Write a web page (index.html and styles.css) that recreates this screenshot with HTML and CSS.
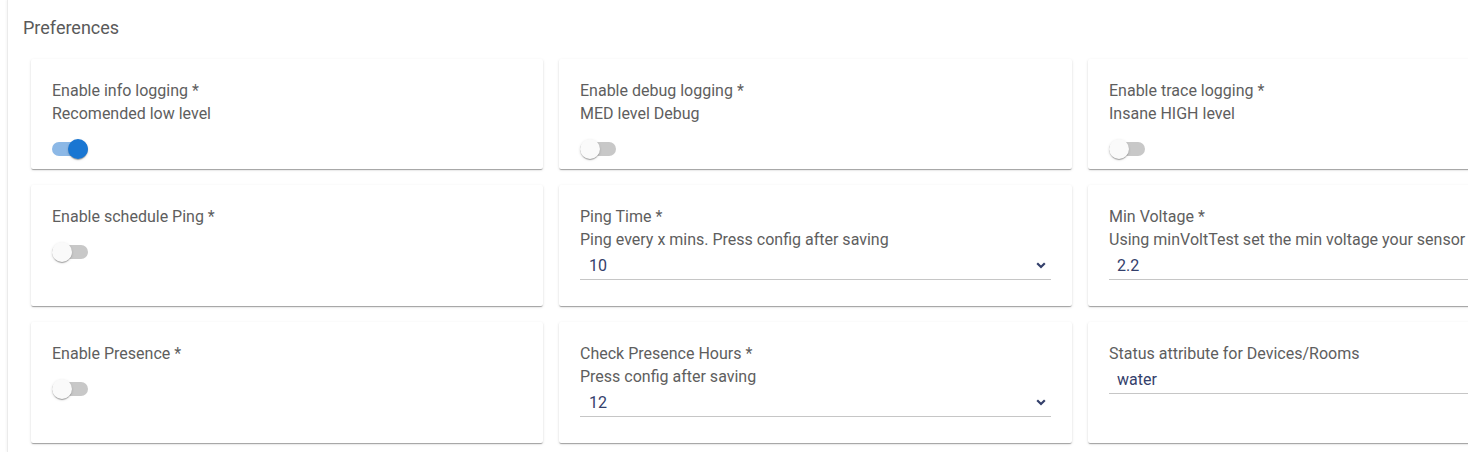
FILE: index.html
```html
<!DOCTYPE html>
<html>
<head>
<meta charset="utf-8">
<link rel="stylesheet" href="styles.css">
</head>
<body>
<div class="panel">
  <h2 class="title">Preferences</h2>
  <div class="grid">
    <div class="card">
      <div class="label">Enable info logging *</div>
      <div class="label">Recomended low level</div>
      <div class="switch on"><span class="track"></span><span class="knob"></span></div>
    </div>
    <div class="card">
      <div class="label">Enable debug logging *</div>
      <div class="label">MED level Debug</div>
      <div class="switch"><span class="track"></span><span class="knob"></span></div>
    </div>
    <div class="card">
      <div class="label">Enable trace logging *</div>
      <div class="label">Insane HIGH level</div>
      <div class="switch"><span class="track"></span><span class="knob"></span></div>
    </div>

    <div class="card">
      <div class="label">Enable schedule Ping *</div>
      <div class="switch"><span class="track"></span><span class="knob"></span></div>
    </div>
    <div class="card">
      <div class="label">Ping Time *</div>
      <div class="label">Ping every x mins. Press config after saving</div>
      <div class="field select">
        <span class="value">10</span>
        <svg class="chev" width="10" height="7" viewBox="0 0 10 7"><path d="M1.2 1.2L5 5L8.8 1.2" fill="none" stroke="#34406b" stroke-width="2.2"/></svg>
      </div>
    </div>
    <div class="card">
      <div class="label">Min Voltage *</div>
      <div class="label nowrap">Using minVoltTest set the min voltage your sensor</div>
      <div class="field wide"><span class="value">2.2</span></div>
    </div>

    <div class="card">
      <div class="label">Enable Presence *</div>
      <div class="switch"><span class="track"></span><span class="knob"></span></div>
    </div>
    <div class="card">
      <div class="label">Check Presence Hours *</div>
      <div class="label">Press config after saving</div>
      <div class="field select">
        <span class="value">12</span>
        <svg class="chev" width="10" height="7" viewBox="0 0 10 7"><path d="M1.2 1.2L5 5L8.8 1.2" fill="none" stroke="#34406b" stroke-width="2.2"/></svg>
      </div>
    </div>
    <div class="card">
      <div class="label">Status attribute for Devices/Rooms</div>
      <div class="field wide"><span class="value">water</span></div>
    </div>
  </div>
</div>
</body>
</html>
```

FILE: styles.css
```css
html, body {
  margin: 0;
  padding: 0;
  overflow: hidden;
  background: #ffffff;
  font-family: Roboto, "Liberation Sans", sans-serif;
}

.panel {
  margin-left: 7px;
  border-left: 1px solid #ebebeb;
  box-shadow: -1px 0 2px rgba(0,0,0,0.04);
  min-height: 452px;
  box-sizing: border-box;
}

.title {
  margin: 0;
  padding: 17px 0 0 15px;
  font-size: 18px;
  line-height: 22px;
  font-weight: 400;
  color: #5a5a5a;
}

.grid {
  display: grid;
  grid-template-columns: 512px 513px 512px;
  column-gap: 16px;
  row-gap: 16px;
  padding: 20px 0 0 23px;
  width: max-content;
}

.card {
  background: #fff;
  border-radius: 2px;
  padding: 20px 21px 10px 21px;
  box-shadow: 0 2px 1px -1px rgba(0,0,0,0.2), 0 1px 1px 0 rgba(0,0,0,0.14), 0 1px 3px 0 rgba(0,0,0,0.12);
  box-sizing: border-box;
}

.label {
  font-size: 16px;
  line-height: 23px;
  color: #5e5e5e;
}

.nowrap {
  white-space: nowrap;
}

.switch {
  position: relative;
  width: 36px;
  height: 20px;
  margin-top: 14px;
}

.track {
  position: absolute;
  left: 0;
  top: 3px;
  width: 36px;
  height: 14px;
  border-radius: 7px;
  background: #c8c8c8;
}

.knob {
  position: absolute;
  left: 0;
  top: 0;
  width: 20px;
  height: 20px;
  border-radius: 50%;
  background: #fafafa;
  box-shadow: 0 2px 1px -1px rgba(0,0,0,0.2), 0 1px 1px 0 rgba(0,0,0,0.14), 0 1px 3px 0 rgba(0,0,0,0.12);
}

.switch.on .track {
  background: #8cb8e6;
}

.switch.on .knob {
  left: 16px;
  background: #1976d2;
}

.field {
  display: flex;
  align-items: center;
  height: 28px;
  border-bottom: 1px solid #c6c6c6;
  padding-left: 9px;
  padding-right: 5px;
  margin-bottom: 16px;
}

.field.wide {
  margin-right: -200px;
  padding-left: 8px;
}

.value {
  flex: 1;
  font-size: 16px;
  color: #34406b;
}

.chev {
  display: block;
}
```
